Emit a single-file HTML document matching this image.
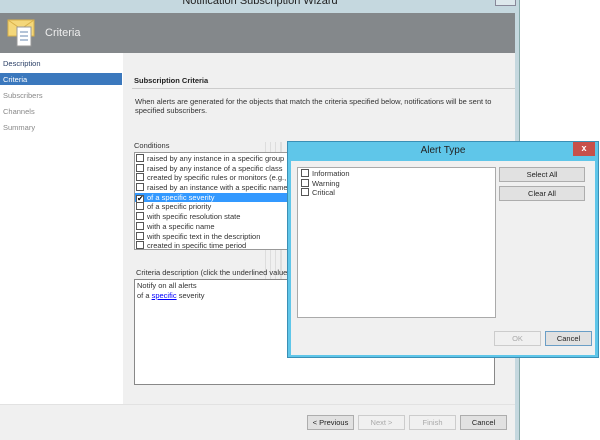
<!DOCTYPE html>
<html><head><style>
*{margin:0;padding:0;box-sizing:border-box}
body{width:600px;height:440px;position:relative;overflow:hidden;background:#fff;font-family:"Liberation Sans",sans-serif;font-size:7.5px;color:#333}
.a{position:absolute}
.btn{position:absolute;border:1px solid #adadad;background:#e1e1e1;text-align:center;font-size:7.5px;color:#222;line-height:13px}
.dis{color:#aaa;border-color:#ccc;background:#f0f0f0}
.cb{display:inline-block;width:8px;height:8px;border:1px solid #555;background:#fff;vertical-align:-1px;margin-right:3px;position:relative}
.li{height:9.7px;line-height:9.7px;white-space:nowrap;padding-left:1px}
</style></head><body>
<div class="a" style="left:0;top:0;width:520px;height:440px;background:#c5d8df"></div>
<div class="a" style="left:519px;top:0;width:1px;height:440px;background:#8aa"></div>
<div class="a" style="left:0;top:-5px;width:520px;text-align:center;font-size:11px;color:#222">Notification Subscription Wizard</div>
<div class="a" style="left:495px;top:-4px;width:21px;height:10px;border:1px solid #889;background:#dde8ec"></div>
<div class="a" style="left:0;top:13px;width:515px;height:40px;background:#84888b"></div>
<svg class="a" style="left:7px;top:18px" width="30" height="30" viewBox="0 0 30 30"><path d="M1 2h26v16H1z" fill="#f4d77a" stroke="#d9b14a"/><path d="M1 2l13 9 13-9" fill="none" stroke="#d9b14a"/><rect x="10" y="9" width="14" height="19" fill="#fff" stroke="#999"/><path d="M13 14h8M13 18h8M13 22h8" stroke="#6a8ab0"/></svg>
<div class="a" style="left:45px;top:27px;font-size:11px;color:#eee">Criteria</div>
<div class="a" style="left:0;top:53px;width:123px;height:351px;background:#fff"></div>
<div class="a" style="left:123px;top:53px;width:392px;height:351px;background:#f0f0f0"></div>
<div class="a" style="left:0;top:404px;width:515px;height:36px;background:#f0f0f0;border-top:1px solid #e2e2e2"></div>
<div class="a" style="left:3px;top:59px;color:#2a3f66">Description</div>
<div class="a" style="left:0;top:73px;width:122px;height:12px;background:#3b78bd"></div>
<div class="a" style="left:3px;top:75px;color:#fff">Criteria</div>
<div class="a" style="left:3px;top:91px;color:#888">Subscribers</div>
<div class="a" style="left:3px;top:107px;color:#888">Channels</div>
<div class="a" style="left:3px;top:123px;color:#888">Summary</div>
<div class="a" style="left:134px;top:76px;font-weight:bold;color:#222">Subscription Criteria</div>
<div class="a" style="left:132px;top:88px;width:383px;height:1px;background:#ccc"></div>
<div class="a" style="left:135px;top:97px;line-height:9px;width:380px">When alerts are generated for the objects that match the criteria specified below, notifications will be sent to specified subscribers.</div>
<div class="a" style="left:265px;top:142px;width:17px;height:216px;border-left:1px solid #ddd;border-right:1px solid #ddd;background:repeating-linear-gradient(90deg,transparent 0 4px,#ddd 4px 5px)"></div>
<div class="a" style="left:134px;top:141px">Conditions</div>
<div class="a" style="left:134px;top:152px;width:160px;height:98px;background:#fff;border:1px solid #999;padding-top:1px;overflow:hidden">
<div class="li"><span class="cb"></span>raised by any instance in a specific group</div>
<div class="li"><span class="cb"></span>raised by any instance of a specific class</div>
<div class="li"><span class="cb"></span>created by specific rules or monitors (e.g., source)</div>
<div class="li"><span class="cb"></span>raised by an instance with a specific name</div>
<div class="li" style="background:#3399ff;color:#fff"><span class="cb" style="font-size:8px;line-height:6px;color:#000">✔</span>of a specific severity</div>
<div class="li"><span class="cb"></span>of a specific priority</div>
<div class="li"><span class="cb"></span>with specific resolution state</div>
<div class="li"><span class="cb"></span>with a specific name</div>
<div class="li"><span class="cb"></span>with specific text in the description</div>
<div class="li"><span class="cb"></span>created in specific time period</div>
</div>
<div class="a" style="left:136px;top:268px">Criteria description (click the underlined value to edit)</div>
<div class="a" style="left:134px;top:279px;width:361px;height:106px;background:#fff;border:1px solid #888;padding:1px 2px;line-height:10px">Notify on all alerts<br>of a <span style="color:#00f;text-decoration:underline">specific</span> severity</div>
<div class="btn" style="left:307px;top:415px;width:47px;height:15px">&lt; Previous</div>
<div class="btn dis" style="left:358px;top:415px;width:47px;height:15px">Next &gt;</div>
<div class="btn dis" style="left:409px;top:415px;width:47px;height:15px">Finish</div>
<div class="btn" style="left:460px;top:415px;width:47px;height:15px">Cancel</div>
<div class="a" style="left:287px;top:141px;width:312px;height:217px;background:#5fc6e9;border:1px solid #3a8fb5"></div>
<div class="a" style="left:287px;top:145px;width:312px;text-align:center;font-size:10px;color:#222">Alert Type</div>
<div class="a" style="left:573px;top:142px;width:22px;height:14px;background:#c7504a;color:#fff;font-weight:bold;text-align:center;font-size:9px;line-height:13px">x</div>
<div class="a" style="left:291px;top:161px;width:304px;height:194px;background:#f0f0f0"></div>
<div class="a" style="left:297px;top:167px;width:199px;height:151px;background:#fff;border:1px solid #aaa;padding:1px 2px">
<div class="li"><span class="cb"></span>Information</div>
<div class="li"><span class="cb"></span>Warning</div>
<div class="li"><span class="cb"></span>Critical</div>
</div>
<div class="btn" style="left:499px;top:167px;width:86px;height:15px">Select All</div>
<div class="btn" style="left:499px;top:186px;width:86px;height:15px">Clear All</div>
<div class="btn dis" style="left:494px;top:331px;width:47px;height:15px">OK</div>
<div class="btn" style="left:545px;top:331px;width:47px;height:15px;border-color:#6a9ec6">Cancel</div>
</body></html>
